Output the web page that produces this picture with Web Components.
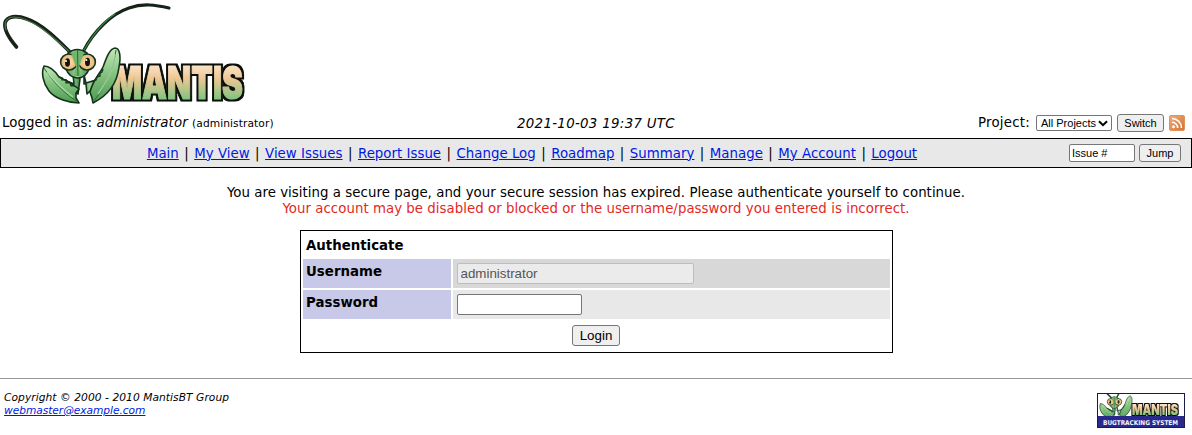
<!DOCTYPE html>
<html lang="en"><head><meta charset="utf-8"><title>Mantis</title>
<style>
body{margin:0;background:#fff;color:#000;font:13.33px/16px "DejaVu Sans",sans-serif}
</style></head><body><mantis-page></mantis-page>
<script>
const define=(name,html)=>customElements.define(name,class extends HTMLElement{
  constructor(){super();this.attachShadow({mode:'open'}).innerHTML=html;}
});

/* Insect drawing, shared by the logo and the footer badge */
define('mantis-insect',`<style>:host{display:block}svg{display:block;width:100%;height:100%;overflow:visible}</style>
<svg viewBox="0 0 175 108"><defs>
<linearGradient id="c" x1="0" y1="0" x2="0" y2="1"><stop offset="0" stop-color="#c5e8b9"/><stop offset=".45" stop-color="#86c481"/><stop offset="1" stop-color="#4c9b52"/></linearGradient>
<linearGradient id="h" x1="0" x2="1"><stop offset="0" stop-color="#4f9c52"/><stop offset=".5" stop-color="#a0d49a"/><stop offset="1" stop-color="#438b48"/></linearGradient>
<radialGradient id="e"><stop offset="0" stop-color="#ffdfaa"/><stop offset="1" stop-color="#e5b473"/></radialGradient></defs>
<g fill="none" stroke-linecap="round"><path d="M16.500 47C8 37 4 29 5 23C7 16 16 15 27 19C42 24 57 39 71 53" stroke="#172319" stroke-width="3.600"/><path d="M6 30C3 21 8 17 14 17C31 17 51 35 71 53" stroke="#497546" stroke-width="1.200"/>
<path d="M83.500 51C94 31 111 14 129 8C143 3 156 5 169 8" stroke="#172319" stroke-width="3.200"/><path d="M84 50C94 33 104 21 115 14" stroke="#398442" stroke-width="1.300"/></g>
<g stroke="#14331b" stroke-width="1.600" stroke-linejoin="round">
<path d="M73 74L74 84L62 79L66 87L78 94L80 79L78 74Z" fill="url(#h)"/><path d="M84 75L86 83L96 80L91 90L87 94L86 84L84 84Z" fill="url(#h)"/>
<path d="M44 66C49 66 55 71 59 77C66 80 74 85 79 89L76 93L76 98L79 103C70 103 55 99 49 91C43 83 41 73 44 66Z" fill="url(#c)"/>
<path d="M115 48C120 48 121 57 119 67C117 84 107 96 93 103L92 98L90 92C93 80 99 75 103 67C106 59 109 49 115 48Z" fill="url(#c)"/>
<path d="M68 53Q77 46 87 53L89 69Q86 78 77 78Q69 77 66 69Z" fill="url(#h)"/>
<ellipse cx="69" cy="62" rx="8.400" ry="8" fill="url(#e)"/><ellipse cx="87" cy="62" rx="8.400" ry="8" fill="url(#e)"/></g>
<path d="M71 53Q78 49 84 53L79 67L81 76H74L76 67Z" fill="#6fb56c"/>
<path d="M77.500 50L78 76M44 68C53 82 65 94 78 102M116 50C113 72 103 90 93 102" fill="none" stroke="#2c6938" stroke-width="1"/>
<path d="M47 72C56 83 65 91 73 97M115 54C112 72 107 82 98 94" fill="none" stroke="#b8e5b0" stroke-width="1.600" opacity=".7"/>
<ellipse cx="67.500" cy="62.500" rx="2.500" ry="4.300" fill="#15130e"/><ellipse cx="87.500" cy="62" rx="2.500" ry="4.300" fill="#15130e"/><circle cx="66" cy="61" r="1.100" fill="#fff"/><circle cx="86.300" cy="60" r="1.100" fill="#fff"/>
<path d="M59 77l3 .8 0 2 4 0 0 3 4 0 1 3 4 0M103 69l-1 3-2 1 0 3-3 1 -1 3-3 1" fill="none" stroke="#173a1c" stroke-width="1.400"/></svg>`);

const wordmark=(size,len,x,y,sw)=>`<text x="${x}" y="${y}" textLength="${len}" lengthAdjust="spacingAndGlyphs" font-family="Inter,sans-serif" font-weight="900" font-style="normal" font-size="${size}" fill="url(#g)" stroke="url(#g)" stroke-width="${sw}" stroke-linejoin="round" filter="url(#k)">MANTIS</text>`;
const grad=r=>`<defs><linearGradient id="g" x1="0" y1="0" x2="0" y2="1"><stop offset=".2" stop-color="#fbe4c9"/><stop offset=".45" stop-color="#edc794"/><stop offset=".8" stop-color="#86c481"/></linearGradient>
<filter id="k" x="-5%" y="-10%" width="110%" height="120%" color-interpolation-filters="sRGB"><feMorphology in="SourceAlpha" operator="dilate" radius="${r}" result="d"/><feFlood flood-color="#0b0f09"/><feComposite in2="d" operator="in" result="b"/><feMerge><feMergeNode in="b"/><feMergeNode in="SourceGraphic"/></feMerge></filter></defs>`;
define('mantis-logo',`<style>:host{display:grid;height:108px;width:260px}mantis-insect,svg{grid-area:1/1}mantis-insect{width:175px;height:108px}svg{display:block;overflow:visible}</style>
<svg width="260" height="108">${grad(2)}${wordmark(46,131,112,98.5,1.2)}</svg><mantis-insect></mantis-insect>`);
define('mantis-badge',`<style>:host{display:grid;box-sizing:border-box;width:88px;height:35px;border:1px solid #191b4a;background:linear-gradient(#fff 22px,#29298b 22px);font-style:normal}svg,.i{grid-area:1/1}svg{display:block;overflow:visible}.i{width:86px;height:22px;overflow:hidden}mantis-insect{width:73px;height:45px;margin:-18px 0 0 -16px}
</style><svg width="86" height="33">${grad(1)}${wordmark(14.5,46,34,21,.2)}</svg><div class="i"><mantis-insect></mantis-insect></div><svg width="86" height="33"><text x="5" y="30.500" textLength="75" lengthAdjust="spacingAndGlyphs" font-family="DejaVu Sans,sans-serif" font-weight="bold" font-size="6.500" fill="#f5f5ff">BUGTRACKING SYSTEM</text></svg>`);

const btn=`button{box-sizing:border-box;border:1px solid #767676;border-radius:3px;background:#efefef;color:#000;padding:0;margin:0;font:11px "Liberation Sans",sans-serif}`;
define('rss-icon',`<style>:host{display:block;width:16px;height:16px}svg{display:block}</style><svg width="16" height="16"><defs><linearGradient id="o" x2="1" y2="1"><stop stop-color="#efad7b"/><stop offset="1" stop-color="#d66f2e"/></linearGradient></defs><rect x=".5" y=".5" width="15" height="15" rx="1.500" fill="url(#o)" stroke="#df925b"/><circle cx="4.500" cy="11.700" r="1.500" fill="#fff"/><path d="M3 7.300a5.700 5.700 0 0 1 5.700 5.700M3 3.500A9.500 9.500 0 0 1 12.500 13" fill="none" stroke="#fff" stroke-width="1.600"/></svg>`);
define('login-info',`<style>:host{display:grid;grid-template-columns:1fr auto 1fr;height:30px;box-sizing:border-box;padding:0 7px;align-items:center}
.u{margin-left:-5px;padding-top:1px;letter-spacing:.08px}.d{letter-spacing:.32px;padding-top:1px}small{font-size:10.67px}.p{display:flex;justify-content:flex-end;align-items:center}.p>span{margin-right:6px;letter-spacing:.25px}
.s{display:flex;align-items:center;justify-content:space-between;box-sizing:border-box;width:76px;height:16px;border:1px solid #767676;border-radius:2px;padding:0 3px 0 4px;font:11px "Liberation Sans",sans-serif;margin-right:5px}
${btn}button{width:47px;height:18px;margin-right:5px}</style>
<div class="u">Logged in as: <i>administrator</i> <small>(administrator)</small></div><i class="d">2021-10-03 19:37 UTC</i>
<div class="p"><span>Project:</span><div class="s">All Projects<svg width="10" height="7"><path d="M1 1.200L5 5.200L9 1.200" fill="none" stroke="#000" stroke-width="2"/></svg></div><button>Switch</button><rss-icon></rss-icon></div>`);
define('nav-link',`<style>:host{display:inline}a{color:#0019e0;text-decoration:underline}</style><a href="#"><slot></slot></a>`);
define('main-menu',`<style>:host{display:flex;box-sizing:border-box;height:30px;border:1px solid #000;background:#e8e8e8;align-items:center}
.n{width:1062px;padding-top:1px;text-align:center;white-space:nowrap;letter-spacing:.02px}.n span{margin:0 1.2px}.j{margin-left:6px;display:flex;align-items:center}
input{box-sizing:border-box;width:66px;height:18px;border:1px solid #767676;border-radius:2px;background:#fff;padding:1px 2px;margin:0 4px 0 0;font:11px "Liberation Sans",sans-serif}${btn}button{width:42px;height:18px}</style>
<div class="n">${['Main','My View','View Issues','Report Issue','Change Log','Roadmap','Summary','Manage','My Account','Logout'].map(t=>`<nav-link>${t}</nav-link>`).join(' <span>|</span> ')}</div><div class="j"><input value="Issue #"><button>Jump</button></div>`);
define('field-row',`<style>:host{display:grid;grid-template-columns:148px 437px;gap:2px;height:29px}.l{background:#c8c8e8;padding:5px 3px 3px 3.5px;font-weight:bold;letter-spacing:.04px}.v{background:var(--row,#e8e8e8);padding:4px}</style><div class="l"><slot name="label"></slot></div><div class="v"><slot></slot></div>`);
define('login-form',`<style>:host{display:grid;grid-template-rows:24px 29px 29px 29px;gap:2px;box-sizing:border-box;width:593px;height:123px;border:1px solid #000;padding:2px;margin:0 auto}
.t{padding:5px 3px 3px 3.5px;font-weight:bold}.f{display:flex;justify-content:center;align-items:center}
input{display:block;box-sizing:border-box;height:21px;width:125px;border:1px solid #767676;border-radius:2px;background:#fff;margin:0;padding:1px 3px;font:13.33px "Liberation Sans",sans-serif}
input:disabled{width:237px;background:#ebebeb;border-color:#bdbdbd;color:#545454}${btn}button{width:48px;height:21px;font-size:13.33px}</style>
<div class="t">Authenticate</div>
<field-row style="--row:#d8d8d8"><span slot="label">Username</span><input value="administrator" disabled></field-row>
<field-row><span slot="label">Password</span><input type="password"></field-row>
<div class="f"><button>Login</button></div>`);
define('page-footer',`<style>:host{display:flex;justify-content:space-between;border-top:1px solid #999;margin-top:25px;padding:12px 7px 0 4px;font-size:10.67px;line-height:13px;font-style:italic;letter-spacing:.06px}nav-link{letter-spacing:-.05px}mantis-badge{margin-top:2px;letter-spacing:0}</style>
<div>Copyright © 2000 - 2010 MantisBT Group<br><nav-link>webmaster@example.com</nav-link></div><mantis-badge></mantis-badge>`);
define('mantis-page',`<style>:host{display:block;height:435px;overflow:hidden}.m{text-align:center;padding:17px 0 13px;white-space:nowrap;letter-spacing:.04px}.e{color:#e4281f}</style>
<mantis-logo></mantis-logo><login-info></login-info><main-menu></main-menu>
<div class="m">You are visiting a secure page, and your secure session has expired. Please authenticate yourself to continue.<div class="e">Your account may be disabled or blocked or the username/password you entered is incorrect.</div></div>
<login-form></login-form><page-footer></page-footer>`);
</script></body></html>
